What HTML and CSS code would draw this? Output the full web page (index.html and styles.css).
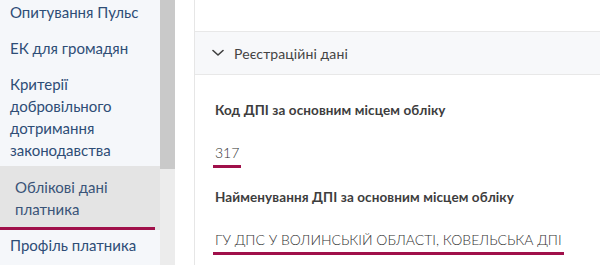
FILE: index.html
```html
<!DOCTYPE html>
<html lang="uk">
<head>
<meta charset="utf-8">
<link rel="stylesheet" href="styles.css">
</head>
<body>
<div class="page">
  <nav class="sidebar">
    <ul class="nav">
      <li class="nav-item">Опитування Пульс</li>
      <li class="nav-item">ЕК для громадян</li>
      <li class="nav-item">Критерії добровільного дотримання законодавства</li>
      <li class="nav-item active">Облікові дані платника</li>
      <li class="nav-item after-active">Профіль платника</li>
    </ul>
  </nav>
  <div class="scrollbar"><div class="thumb"></div></div>
  <div class="spacer"></div>
  <main class="main">
    <div class="section-head">
      <svg class="chevron" width="12" height="8" viewBox="0 0 12 8"><path d="M1 1.5 L6 6 L11 1.5" fill="none" stroke="#3f3f3f" stroke-width="1.6" stroke-linecap="round" stroke-linejoin="round"/></svg>
      <span class="section-title">Реєстраційні дані</span>
    </div>
    <div class="fields">
      <div class="label">Код ДПІ за основним місцем обліку</div>
      <div class="value"><span class="value-text">317</span></div>
      <div class="label">Найменування ДПІ за основним місцем обліку</div>
      <div class="value"><span class="value-text">ГУ ДПС У ВОЛИНСЬКІЙ ОБЛАСТІ, КОВЕЛЬСЬКА ДПІ</span></div>
    </div>
  </main>
</div>
</body>
</html>
```
FILE: styles.css
```css
html, body {
  margin: 0;
  padding: 0;
  background: #ffffff;
  overflow: hidden;
}
body {
  font-family: Lato, "Noto Sans", "Liberation Sans", sans-serif;
  width: 600px;
  height: 265px;
}
.page {
  display: flex;
  height: 265px;
}
.sidebar {
  width: 160px;
  background: #f5f7fa;
  flex: none;
  overflow: hidden;
}
.nav {
  list-style: none;
  margin: -6px 0 0 0;
  padding: 0;
}
.nav-item {
  font-size: 15px;
  line-height: 22px;
  color: #2e4d76;
  padding: 7px 10px;
}
.nav-item.active {
  margin-top: -2px;
  padding: 10px 15px 10px 15px;
  background: linear-gradient(#a0104a, #a0104a) 0 100% / 155px 3px no-repeat, #e4e4e4;
  color: #3a5478;
}
.nav-item.after-active {
  padding-top: 4px;
}
.scrollbar {
  width: 15px;
  flex: none;
  background: #ececec;
}
.thumb {
  height: 169px;
  background: #c9c9c9;
}
.spacer {
  width: 19px;
  flex: none;
}
.main {
  flex: 1;
  border-left: 1px solid #e6e6e6;
  padding-top: 31px;
}
.section-head {
  height: 42px;
  border-top: 1px solid #e8e8e8;
  border-bottom: 1px solid #e8e8e8;
  background: #f7f8fa;
  display: flex;
  align-items: center;
  padding-left: 17px;
  gap: 10px;
}
.chevron {
  display: block;
}
.section-title {
  font-size: 14px;
  color: #444;
  letter-spacing: 0.1px;
}
.fields {
  padding: 25px 20px 0 20px;
}
.label {
  font-size: 13.5px;
  font-weight: 700;
  line-height: 20px;
  color: #3d3d3d;
  letter-spacing: 0.1px;
}
.value {
  margin: 22px 0 19px 0;
}
.value-text {
  display: inline-block;
  white-space: nowrap;
  font-size: 14px;
  font-weight: 300;
  line-height: 20px;
  color: #333;
  padding: 0 2px 2px 2px;
  margin-left: -2px;
  border-bottom: 3px solid #a0104a;
}
```
